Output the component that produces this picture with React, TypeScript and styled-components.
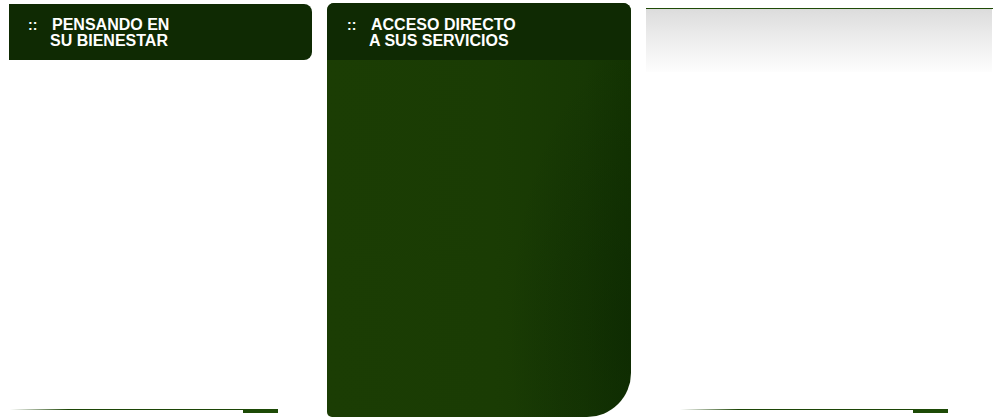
import React from "react";
import styled, { createGlobalStyle } from "styled-components";

const Global = createGlobalStyle`
  html, body { margin: 0; padding: 0; background: #ffffff; }
  body { font-family: "Liberation Sans", Arial, sans-serif; }
`;

const Page = styled.div`
  display: flex;
  gap: 15px;
  height: 420px;
  padding-left: 9px;
  box-sizing: border-box;
`;

const SideColumn = styled.div<{ $width: number; $top: number }>`
  width: ${(p) => p.$width}px;
  display: flex;
  flex-direction: column;
  padding-top: ${(p) => p.$top}px;
  padding-bottom: 7px;
  box-sizing: border-box;
`;

const Header = styled.div`
  height: 56px;
  background: #0f2a03;
  border-radius: 0 8px 8px 0;
  box-sizing: border-box;
`;

const Title = styled.div<{ $dots: number; $text: number; $top: number }>`
  display: grid;
  grid-template-columns: ${(p) => p.$text}px auto;
  padding: ${(p) => p.$top}px 0 0 ${(p) => p.$dots}px;
  color: #ffffff;
  font-family: "Liberation Sans", Arial, sans-serif;
  font-weight: bold;
  font-size: 16px;
  line-height: 16px;
`;

const Dots = styled.span`
  font-weight: bold;
  font-size: 14px;
`;

const Lines = styled.div`
  display: flex;
  flex-direction: column;
`;

const SecondLine = styled.span`
  margin-left: -2px;
`;

const Middle = styled.div`
  width: 304px;
  margin-top: 3px;
  height: 414px;
  border-radius: 7px 8px 44px 5px;
  overflow: hidden;
  display: flex;
  flex-direction: column;
  background:
    radial-gradient(ellipse 45% 70% at 105% 80%, rgba(12, 40, 2, 0.7) 0%, rgba(12, 40, 2, 0) 100%),
    linear-gradient(90deg, #1b3d04 0%, #1a3c04 55%, #173804 85%, #133302 100%);
`;

const MiddleHeader = styled.div`
  height: 57px;
  background: #0f2a03;
  flex: none;
`;

const Footer = styled.div<{ $offset: number }>`
  margin-top: auto;
  margin-left: ${(p) => p.$offset}px;
  width: 268px;
  display: flex;
  align-items: flex-start;
`;

const ThinLine = styled.div`
  flex: 1;
  height: 1px;
  background: linear-gradient(90deg, rgba(29, 70, 6, 0) 0%, #1d4606 25%, #1d4606 100%);
`;

const ThickBar = styled.div`
  width: 35px;
  height: 4px;
  background: #1d4a06;
`;

const TopRule = styled.div`
  height: 1px;
  width: 347px;
  background: #1f4a06;
`;

const GreyBox = styled.div`
  width: 346px;
  height: 63px;
  background: linear-gradient(180deg, #dcdcdc 0%, #ececec 45%, #fdfdfd 100%);
`;

function HeaderTitle({ dots, text, top, line1, line2 }: { dots: number; text: number; top: number; line1: string; line2: string }) {
  return (
    <Title $dots={dots} $text={text} $top={top}>
      <Dots>::</Dots>
      <Lines>
        <span>{line1}</span>
        <SecondLine>{line2}</SecondLine>
      </Lines>
    </Title>
  );
}

export default function App() {
  return (
    <>
      <Global />
      <Page>
        <SideColumn $width={303} $top={4}>
          <Header>
            <HeaderTitle dots={19} text={24} top={13} line1="PENSANDO EN" line2="SU BIENESTAR" />
          </Header>
          <Footer $offset={1}>
            <ThinLine />
            <ThickBar />
          </Footer>
        </SideColumn>
        <Middle>
          <MiddleHeader>
            <HeaderTitle dots={20} text={24} top={14} line1="ACCESO DIRECTO" line2="A SUS SERVICIOS" />
          </MiddleHeader>
        </Middle>
        <SideColumn $width={347} $top={8}>
          <TopRule />
          <GreyBox />
          <Footer $offset={34}>
            <ThinLine />
            <ThickBar />
          </Footer>
        </SideColumn>
      </Page>
    </>
  );
}
